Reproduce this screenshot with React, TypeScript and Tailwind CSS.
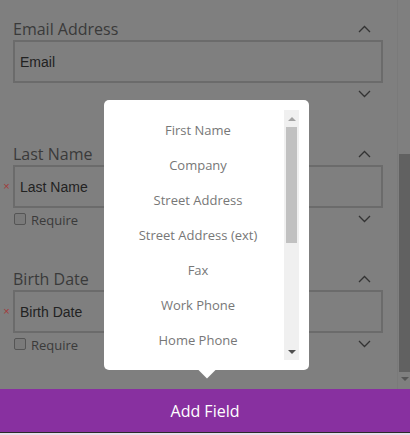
import React from 'react'

const fields = [
  { label: 'Email Address', placeholder: 'Email', required: false },
  { label: 'Last Name', placeholder: 'Last Name', required: true },
  { label: 'Birth Date', placeholder: 'Birth Date', required: true },
]

const options = [
  'First Name',
  'Company',
  'Street Address',
  'Street Address (ext)',
  'Fax',
  'Work Phone',
  'Home Phone',
]

function Chevron({ up }: { up?: boolean }) {
  return (
    <svg width="13" height="8" viewBox="0 0 13 8" className="text-[#333]">
      <polyline
        points={up ? '1,7 6.5,1.5 12,7' : '1,1 6.5,6.5 12,1'}
        fill="none"
        stroke="currentColor"
        strokeWidth="1.3"
      />
    </svg>
  )
}

function FieldBlock({ label, placeholder, required }: { label: string; placeholder: string; required: boolean }) {
  return (
    <div className="flex flex-col h-[125px]">
      <div className="flex items-center justify-between h-[22px] pl-[13px] pr-[26px]">
        <span className="text-[16px] text-[#3a3a3a]">{label}</span>
        <Chevron up />
      </div>
      <div className="flex items-center">
        <div className="w-[13px] flex justify-center">
          {required && <span className="text-[11px] leading-none text-[#a33a3a] font-['Liberation_Sans',sans-serif]">×</span>}
        </div>
        <div className="w-[370px] h-[43px] border-2 border-[#6b6b6b] flex items-center px-[5px] pt-[1px]">
          <span className="text-[14px] text-[#222] font-['Liberation_Sans',Arial,sans-serif]">{placeholder}</span>
        </div>
      </div>
      <div className="flex items-center justify-between h-[20px] mt-[1px] pl-[14px] pr-[26px]">
        {required ? (
          <div className="flex items-center gap-[5px]">
            <div className="w-[12px] h-[12px] rounded-[2px] border border-[#555] bg-[#7a7a7a]" />
            <span className="text-[13px] text-[#3a3a3a] pt-[3px]">Require</span>
          </div>
        ) : (
          <div />
        )}
        <Chevron />
      </div>
    </div>
  )
}

export default function App() {
  return (
    <div className="relative w-[410px] h-[435px] overflow-hidden bg-[#7f7f7f] font-['Open_Sans',sans-serif]">
      <div className="flex h-[389px]">
        <div className="flex-1 pt-[18px]">
          {fields.map((f) => (
            <FieldBlock key={f.label} {...f} />
          ))}
        </div>
        <div className="w-[13px] border-l border-[#7a7a7a] flex flex-col pt-[154px] pl-[1px]">
          <div className="h-[218px] bg-[#616161]" />
          <div className="flex justify-center pt-[5px]">
            <div className="w-0 h-0 border-l-[4px] border-r-[4px] border-t-[4px] border-l-transparent border-r-transparent border-t-[#555]" />
          </div>
        </div>
      </div>

      <div className="h-[43px] bg-[#8830a0] flex items-center justify-center">
        <span className="text-[16px] text-white">Add Field</span>
      </div>
      <div className="h-[1px] bg-[#2a2a2a]" />
      <div className="h-[2px] bg-[#e9dde9]" />

      {/* add field popover */}
      <div className="absolute left-[104px] top-[100px] w-[205px] h-[270px] bg-white rounded-[5px] flex pt-[10px] pb-[10px] pr-[10px]">
        <div className="flex-1 flex flex-col pt-[3px] pl-[8px]">
          {options.map((o) => (
            <div key={o} className="h-[35px] flex items-center justify-center text-[13px] text-[#777]">
              {o}
            </div>
          ))}
        </div>
        <div className="w-[15px] bg-[#f0f0f0] flex flex-col items-center">
          <div className="h-[17px] flex items-center justify-center">
            <div className="w-0 h-0 border-l-[4px] border-r-[4px] border-b-[4px] border-l-transparent border-r-transparent border-b-[#a3a3a3]" />
          </div>
          <div className="w-[11px] h-[116px] bg-[#c1c1c1]" />
          <div className="flex-1" />
          <div className="h-[17px] flex items-center justify-center">
            <div className="w-0 h-0 border-l-[4px] border-r-[4px] border-t-[4px] border-l-transparent border-r-transparent border-t-[#505050]" />
          </div>
        </div>
        <div className="absolute left-[97px] top-[264px] w-[12px] h-[12px] bg-white rotate-45" />
      </div>
    </div>
  )
}
